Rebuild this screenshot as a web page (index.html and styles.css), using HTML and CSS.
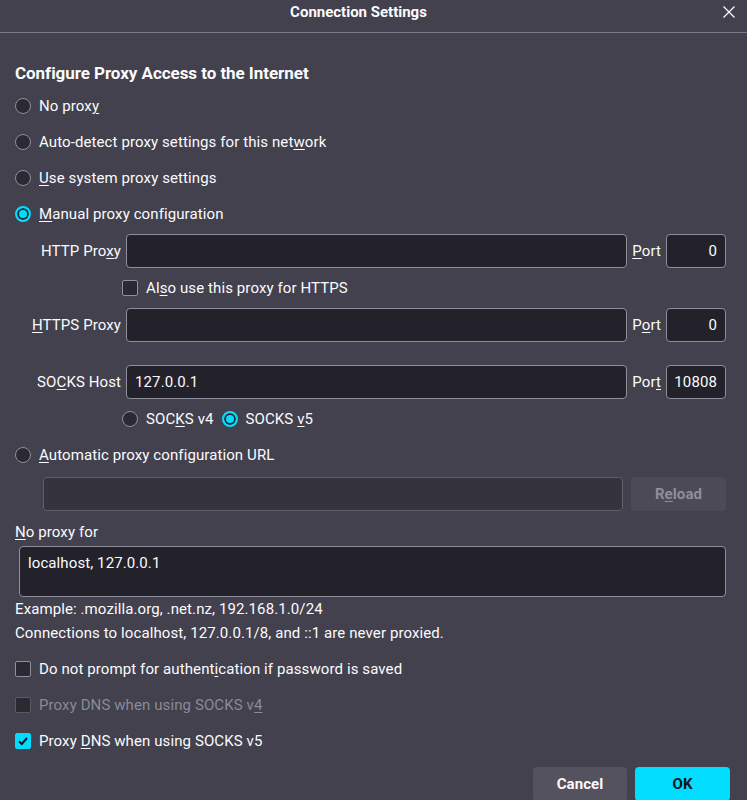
FILE: index.html
```html
<!DOCTYPE html>
<html>
<head>
<meta charset="utf-8">
<link rel="stylesheet" href="styles.css">
</head>
<body>
<div class="titlebar">
  <div class="title">Connection Settings</div>
  <svg class="close" width="12" height="12" viewBox="0 0 12 12"><path d="M0.5 0.5 L11.5 11.5 M11.5 0.5 L0.5 11.5" stroke="#fbfbfe" stroke-width="1.2" fill="none"/></svg>
</div>
<div class="content">
  <h1 class="heading">Configure Proxy Access to the Internet</h1>
  <div class="row radio-row"><span class="radio"></span><span>No prox<u>y</u></span></div>
  <div class="row radio-row"><span class="radio"></span><span>Auto-detect proxy settings for this net<u>w</u>ork</span></div>
  <div class="row radio-row"><span class="radio"></span><span><u>U</u>se system proxy settings</span></div>
  <div class="row radio-row"><span class="radio checked"></span><span><u>M</u>anual proxy configuration</span></div>

  <div class="manual">
    <div class="mlabel">HTTP Pro<u>x</u>y</div>
    <div class="input"></div>
    <div class="plabel"><u>P</u>ort</div>
    <div class="input port">0</div>

    <div class="check-line"><span class="checkbox"></span><span>Al<u>s</u>o use this proxy for HTTPS</span></div>

    <div class="mlabel"><u>H</u>TTPS Proxy</div>
    <div class="input"></div>
    <div class="plabel">P<u>o</u>rt</div>
    <div class="input port">0</div>

    <div class="mlabel socks">SO<u>C</u>KS Host</div>
    <div class="input socks">127.0.0.1</div>
    <div class="plabel socks">Por<u>t</u></div>
    <div class="input port socks">10808</div>

    <div class="check-line socksver">
      <span class="radio"></span><span>SOC<u>K</u>S v4</span>
      <span class="radio checked"></span><span>SOCKS <u>v</u>5</span>
    </div>
  </div>

  <div class="row auto-row"><span class="radio"></span><span><u>A</u>utomatic proxy configuration URL</span></div>
  <div class="url-row">
    <div class="input disabled"></div>
    <div class="reload">R<u>e</u>load</div>
  </div>

  <div class="noproxy-label"><u>N</u>o proxy for</div>
  <div class="textarea">localhost, 127.0.0.1</div>
  <div class="hint">Example: .mozilla.org, .net.nz, 192.168.1.0/24</div>
  <div class="hint">Connections to localhost, 127.0.0.1/8, and ::1 are never proxied.</div>

  <div class="checks">
    <div class="row check-row"><span class="checkbox"></span><span>Do not prompt for authent<u>i</u>cation if password is saved</span></div>
    <div class="row check-row dim"><span class="checkbox"></span><span>Proxy DNS when using SOCKS v<u>4</u></span></div>
    <div class="row check-row"><span class="checkbox checked"><svg width="12" height="12" viewBox="0 0 12 12"><path d="M2 6.3 L4.8 9 L10 3" stroke="#15141a" stroke-width="2" fill="none"/></svg></span><span>Proxy <u>D</u>NS when using SOCKS v5</span></div>
  </div>

  <div class="buttons">
    <div class="btn cancel">Cancel</div>
    <div class="btn ok">OK</div>
  </div>
</div>
</body>
</html>
```
FILE: styles.css
```css
* { box-sizing: border-box; }
html, body { margin: 0; padding: 0; }
body {
  width: 747px;
  height: 800px;
  overflow: hidden;
  background: #42414d;
  color: #fbfbfe;
  font-family: "Roboto", "Noto Sans", sans-serif;
  font-size: 15px;
  letter-spacing: 0.1px;
}
u { text-decoration: underline; text-underline-offset: 2px; text-decoration-thickness: 1px; }
.titlebar {
  height: 33px;
  border-bottom: 1px solid #7a7984;
  display: flex;
  align-items: center;
  justify-content: center;
  position: relative;
}
.title { font-weight: bold; font-size: 15px; margin-top: -9px; margin-right: 30px; letter-spacing: 0; }
.close { position: absolute; right: 12px; top: 6px; }
.heading {
  margin: 25px 0 0 15px;
  height: 30px;
  display: flex;
  align-items: center;
  font-size: 17px;
  font-weight: bold;
  letter-spacing: -0.05px;
}
.row { display: flex; align-items: center; gap: 8px; }
.radio-row { height: 36px; padding-left: 15px; }
.radio {
  width: 16px; height: 16px; border-radius: 50%;
  border: 1px solid #8f8f9d;
  background: #2b2a33;
  flex: none;
}
.radio.checked {
  background: #00ddff;
  border: 2px solid #00ddff;
  box-shadow: inset 0 0 0 2px #2b2a33;
}
.checkbox {
  width: 16px; height: 16px; border-radius: 2px;
  border: 1px solid #8f8f9d;
  background: #2b2a33;
  flex: none;
  display: flex; align-items: center; justify-content: center;
}
.checkbox.checked { background: #00ddff; border-color: #00ddff; }
.manual {
  margin: 2px 21px 0 32px;
  display: grid;
  grid-template-columns: auto 1fr auto 60px;
  column-gap: 5px;
  align-items: center;
}
.mlabel { text-align: right; white-space: nowrap; }
.plabel { white-space: nowrap; }
.input {
  height: 34px;
  border: 1px solid #8f8f9d;
  border-radius: 4px;
  background: #23222b;
  padding: 0 8px;
  display: flex; align-items: center;
}
.input.port { justify-content: flex-end; }
.socks { margin-top: 23px; }
.check-line {
  grid-column: 1 / -1;
  height: 40px;
  display: flex; align-items: center; gap: 8px;
  padding-left: 90px;
}
.auto-row { height: 32px; padding-left: 15px; }
.url-row {
  margin: 6px 21px 0 43px;
  display: flex; gap: 8px;
}
.url-row .input { flex: 1; }
.input.disabled { background: #35343d; border-color: #5e5d68; }
.reload {
  width: 95px; height: 34px; border-radius: 4px;
  background: #4b4a56; color: #8f8e99;
  font-weight: bold;
  display: flex; align-items: center; justify-content: center;
}
.noproxy-label { margin: 7px 0 0 15px; height: 28px; display: flex; align-items: center; }
.textarea {
  margin: 0 21px 0 19px;
  height: 51px;
  border: 1px solid #8f8f9d;
  border-radius: 4px;
  background: #23222b;
  padding: 7px 8px;
}
.hint { margin-left: 15px; height: 24px; display: flex; align-items: center; }
.checks { margin-top: 6px; }
.check-row { height: 36px; padding-left: 15px; }
.check-row.dim { color: #8b8a95; }
.check-row.dim .checkbox { border-color: #5b5a65; background: #2b2a33; }
.buttons {
  display: flex; justify-content: flex-end; gap: 8px;
  margin-top: 8px; padding-right: 17px;
}
.btn {
  width: 95px; height: 34px; border-radius: 4px;
  display: flex; align-items: center; justify-content: center;
  font-weight: bold;
}
.cancel { background: #53525e; color: #fbfbfe; width: 94px; }
.ok { background: #00ddff; color: #15141a; }
```
